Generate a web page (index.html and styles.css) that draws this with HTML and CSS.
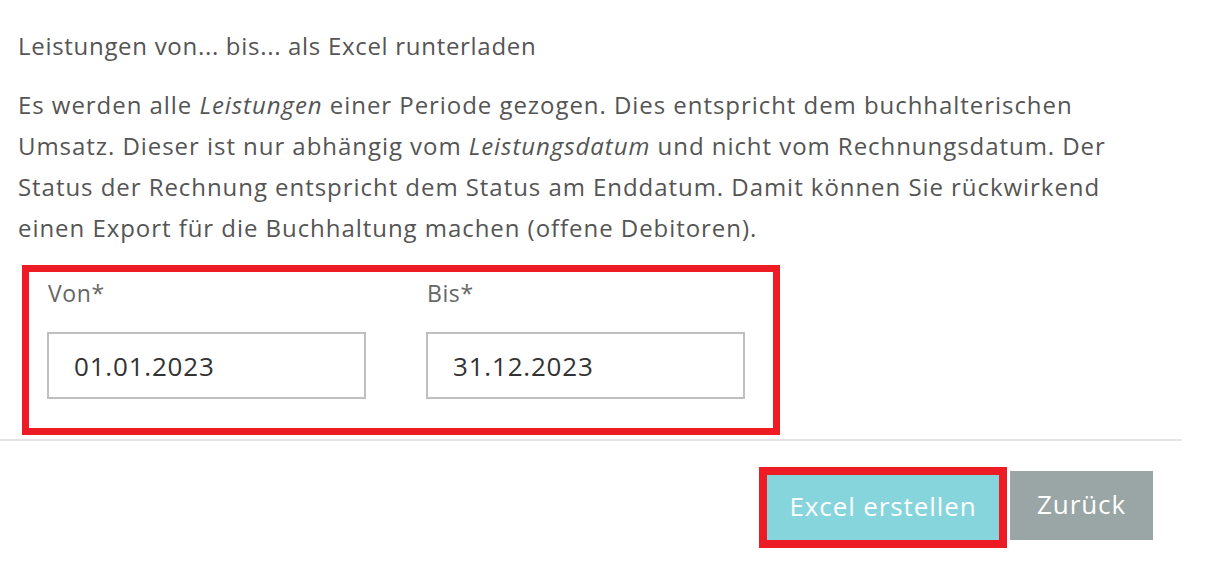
FILE: index.html
```html
<!DOCTYPE html>
<html>
<head>
	<title>Leistungen Export</title>
	<meta charset="utf-8">
	<meta name="viewport" content="width=device-width, initial-scale=1.0">
	<link rel="stylesheet" href="styles.css">
</head>
<body>
	<div class="dialog">
		<div class="content">
			<h2 class="title">Leistungen von... bis... als Excel runterladen</h2>

			<p class="desc">Es werden alle <em>Leistungen</em> einer Periode gezogen. Dies entspricht dem buchhalterischen Umsatz. Dieser ist nur abhängig vom <em>Leistungsdatum</em> und nicht vom Rechnungsdatum. Der Status der Rechnung entspricht dem Status am Enddatum. Damit können Sie rückwirkend einen Export für die Buchhaltung machen (offene Debitoren).</p>

			<div class="fields">
				<div class="field">
					<label class="label">Von*</label>
					<input class="input" type="text" value="01.01.2023">
				</div>
				<div class="field">
					<label class="label">Bis*</label>
					<input class="input" type="text" value="31.12.2023">
				</div>
			</div>
		</div>

		<div class="footer">
			<div class="marked">
				<a href="#" class="btn btn-primary">Excel erstellen</a>
			</div>
			<a href="#" class="btn btn-back">Zurück</a>
		</div>
	</div>
</body>
</html>
```

FILE: styles.css
```css
*,*::after,*::before{
	box-sizing: border-box;
	margin: 0;
	padding: 0;
}

body{
	font-family: 'Open Sans', 'Noto Sans', sans-serif;
	color: #555;
	background: #fff;
}

.dialog{
	width: 1182px;
}

.content{
	padding: 31px 42px 0 18px;
}

.title{
	font-size: 24px;
	font-weight: normal;
	line-height: 30px;
	letter-spacing: 0.7px;
	color: #555;
}

.desc{
	margin-top: 23px;
	font-size: 24px;
	line-height: 41px;
	letter-spacing: 0.95px;
	color: #555;
}

.desc em{
	font-style: italic;
}

.fields{
	display: flex;
	gap: 60px;
	width: 758px;
	margin: 17px 0 0 4px;
	padding: 6px 28px 29px 18px;
	border: 7px solid #ed1c24;
}

.field{
	display: flex;
	flex-direction: column;
	width: 319px;
}

.label{
	font-size: 23px;
	line-height: 30px;
	letter-spacing: 0.6px;
	color: #666;
	padding-left: 1px;
}

.input{
	margin-top: 24px;
	height: 67px;
	border: 2px solid #bfbfbf;
	padding: 0 25px;
	font-family: inherit;
	font-size: 26px;
	letter-spacing: 0.8px;
	color: #333;
	outline: none;
}

.footer{
	margin-top: 4px;
	border-top: 2px solid #e5e5e5;
	padding: 26px 29px 0 0;
	display: flex;
	justify-content: flex-end;
	align-items: flex-start;
	gap: 3px;
}

.marked{
	border: 8px solid #ed1c24;
}

.btn{
	display: flex;
	align-items: center;
	justify-content: center;
	padding-bottom: 4px;
	color: #fff;
	text-decoration: none;
	font-size: 26px;
	letter-spacing: 0.9px;
}

.btn-primary{
	width: 232px;
	height: 65px;
	background-color: #86d4dc;
}

.btn-back{
	margin-top: 4px;
	width: 143px;
	height: 69px;
	background-color: #9aa5a5;
}
```
